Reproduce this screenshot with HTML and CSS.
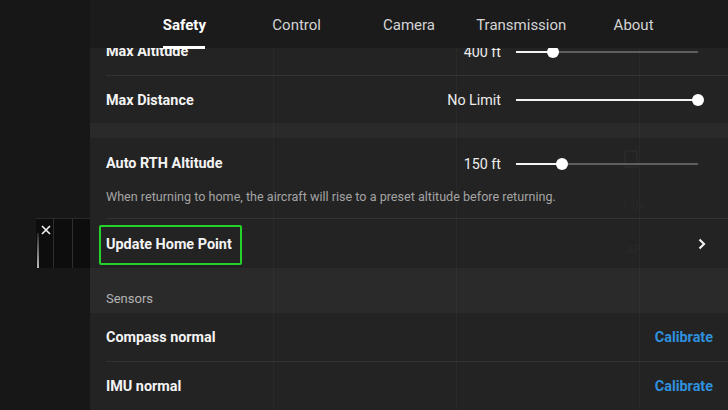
FILE: index.html
```html
<!DOCTYPE html>
<html>
<head>
<meta charset="utf-8">
<link rel="stylesheet" href="styles.css">
</head>
<body>
<div class="app">
  <aside class="side">
    <div class="thumb">
      <svg class="thumb-close" width="10" height="10" viewBox="0 0 10 10"><path d="M1 1 L9 9 M9 1 L1 9" stroke="#f4f4f4" stroke-width="1.6"/></svg>
      <span class="thumb-bar"></span>
      <span class="thumb-col"></span>
      <span class="thumb-col"></span>
      <span class="thumb-col"></span>
    </div>
  </aside>
  <main class="panel">
    <div class="ghost">
      <span class="grid-line g1"></span>
      <span class="grid-line g2"></span>
      <span class="grid-line g3"></span>
      <span class="ghost-icon"></span>
      <span class="ghost-zoom">1.0x</span>
      <span class="ghost-af">AF</span>
    </div>
    <nav class="tabs">
      <span class="tab active">Safety</span>
      <span class="tab">Control</span>
      <span class="tab">Camera</span>
      <span class="tab">Transmission</span>
      <span class="tab">About</span>
    </nav>
    <div class="list">
      <section class="group">
        <div class="row">
          <span class="label">Max Altitude</span>
          <span class="value">400 ft</span>
          <div class="slider"><span class="fill" style="width:37px"></span><span class="thumb-knob" style="left:31px"></span></div>
        </div>
        <div class="row sep">
          <span class="label">Max Distance</span>
          <span class="value">No Limit</span>
          <div class="slider"><span class="fill" style="width:182px"></span><span class="thumb-knob" style="left:176px"></span></div>
        </div>
      </section>
      <div class="band"></div>
      <section class="group">
        <div class="rth">
          <div class="row rth-row">
            <span class="label">Auto RTH Altitude</span>
            <span class="value">150 ft</span>
            <div class="slider"><span class="fill" style="width:46px"></span><span class="thumb-knob" style="left:40px"></span></div>
          </div>
          <p class="desc">When returning to home, the aircraft will rise to a preset altitude before returning.</p>
        </div>
        <div class="row sep link-row">
          <span class="label boxed">Update Home Point</span>
          <svg class="chev" width="10" height="12" viewBox="0 0 10 12"><path d="M2.5 1.5 L7 6 L2.5 10.5" fill="none" stroke="#f0f0f0" stroke-width="2.2"/></svg>
        </div>
      </section>
      <div class="header">Sensors</div>
      <section class="group">
        <div class="row">
          <span class="label">Compass normal</span>
          <span class="action">Calibrate</span>
        </div>
        <div class="row sep">
          <span class="label">IMU normal</span>
          <span class="action">Calibrate</span>
        </div>
      </section>
    </div>
  </main>
</div>
</body>
</html>
```
FILE: styles.css
```css
* { box-sizing: border-box; }
html, body { margin: 0; padding: 0; }
body {
  width: 728px;
  height: 410px;
  overflow: hidden;
  background: #171717;
  font-family: Roboto, "Liberation Sans", sans-serif;
  color: #f2f2f2;
}
.app {
  display: flex;
  height: 410px;
}
.side {
  width: 90px;
  flex: none;
  padding-top: 218px;
  padding-left: 36px;
}
.thumb {
  position: relative;
  width: 54px;
  height: 50px;
  background: #0d0d0d;
  border-top: 1px solid #2a2a2a;
  display: flex;
}
.thumb-col {
  flex: 1;
  border-right: 1px solid #2e2e2e;
}
.thumb-col:last-child { border-right: none; }
.thumb-close {
  position: absolute;
  left: 5px;
  top: 6px;
}
.thumb-bar {
  position: absolute;
  left: 1px;
  top: 14px;
  bottom: 0;
  width: 2px;
  background: linear-gradient(#2a2a2a, #bdbdbd);
}
.panel {
  position: relative;
  flex: 1;
  background: #232323;
  overflow: hidden;
}
.ghost {
  position: absolute;
  inset: 0;
  pointer-events: none;
}
.grid-line {
  position: absolute;
  top: 0;
  bottom: 0;
  width: 1px;
  background: rgba(255,255,255,0.03);
}
.g1 { left: 183px; }
.g2 { left: 366px; }
.g3 { left: 549px; }
.ghost-icon {
  position: absolute;
  left: 534px;
  top: 150px;
  width: 14px;
  height: 18px;
  border: 2px solid rgba(255,255,255,0.03);
  border-radius: 3px;
}
.ghost-zoom, .ghost-af {
  position: absolute;
  font-size: 12px;
  color: rgba(255,255,255,0.04);
}
.ghost-zoom { left: 532px; top: 198px; }
.ghost-af { left: 536px; top: 243px; }
.tabs {
  position: absolute;
  top: 0;
  left: 0;
  right: 0;
  height: 48px;
  background: #1b1b1c;
  display: flex;
  justify-content: center;
  z-index: 2;
}
.tab {
  width: 112.3px;
  text-align: center;
  font-size: 15px;
  line-height: 51px;
  color: #d4d4d4;
}
.tab.active {
  position: relative;
  color: #ffffff;
  font-weight: 700;
}
.tab.active::after {
  content: "";
  position: absolute;
  left: 35px;
  width: 42px;
  bottom: -1px;
  height: 3px;
  background: #ffffff;
}
.list {
  margin-top: 27px;
}
.group {
  display: flex;
  flex-direction: column;
}
.row {
  height: 48px;
  display: flex;
  align-items: center;
  margin-left: 16px;
  padding-right: 15px;
  padding-top: 1px;
}
.row.sep {
  border-top: 1px solid #333334;
}
.label {
  flex: 1;
  font-size: 14.4px;
  font-weight: 700;
  color: #f4f4f4;
}
.value {
  font-size: 14.3px;
  color: #ececec;
  margin-right: 15px;
}
.slider {
  position: relative;
  width: 182px;
  height: 2px;
  background: #5e5e5e;
  margin-right: 15px;
}
.fill {
  position: absolute;
  left: 0;
  top: 0;
  height: 2px;
  background: #f4f4f4;
}
.thumb-knob {
  position: absolute;
  top: -5px;
  width: 12px;
  height: 12px;
  border-radius: 50%;
  background: #ffffff;
}
.band {
  height: 15px;
  background: #2a2a2b;
}
.rth {
  height: 80px;
  display: flex;
  flex-direction: column;
}
.rth-row {
  height: 50px;
}
.desc {
  margin: 1px 0 0 16px;
  font-size: 12.6px;
  color: #a3a3a3;
  line-height: 16px;
}
.link-row {
  height: 50px;
}
.link-row .label { flex: none; }
.boxed {
  position: relative;
}
.boxed::before {
  content: "";
  position: absolute;
  left: -7px;
  right: -10px;
  top: -11px;
  bottom: -12px;
  border: 2px solid #25d12a;
  border-radius: 2px;
}
.chev {
  margin-left: auto;
  margin-right: 6px;
}
.header {
  height: 45px;
  background: #2a2a2b;
  padding: 23px 0 0 16px;
  font-size: 13px;
  color: #b4b4b4;
}
.action {
  font-size: 14.4px;
  font-weight: 700;
  color: #2f90de;
}
```
